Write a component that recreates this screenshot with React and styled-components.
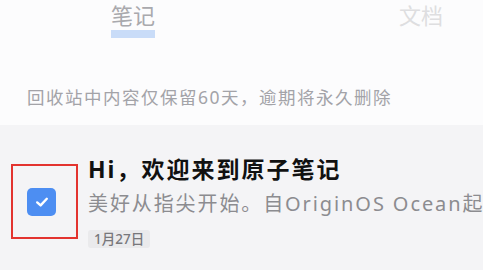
import React from 'react';
import styled, {createGlobalStyle} from 'styled-components';

const GlobalStyle = createGlobalStyle`
    html, body {
        margin: 0;
        padding: 0;
        background: #fcfcfd;
    }
    body {
        width: 483px;
        height: 270px;
        overflow: hidden;
        font-family: "Noto Sans", "Noto Sans CJK SC", sans-serif;
    }
`;

const App = () => {
    const tabs = [
        {label: '笔记', active: true},
        {label: '文档', active: false},
    ];

    return (
        <Page>
            <GlobalStyle/>
            <TabBar>
                {tabs.map(tab => (
                    <Tab key={tab.label}>
                        <TabLabel active={tab.active}>{tab.label}</TabLabel>
                        {tab.active && <TabIndicator/>}
                    </Tab>
                ))}
            </TabBar>

            <Notice>回收站中内容仅保留60天，逾期将永久删除</Notice>

            <NoteList>
                <NoteRow>
                    <SelectFrame>
                        <CheckBox>
                            <svg width="16" height="16" viewBox="0 0 16 16" fill="none">
                                <path d="M3.2 8.4 L6.6 11.4 L12.8 4.8" stroke="#fff" strokeWidth="2.4" strokeLinecap="round" strokeLinejoin="round"/>
                            </svg>
                        </CheckBox>
                    </SelectFrame>
                    <NoteBody>
                        <NoteTitle>Hi，欢迎来到原子笔记</NoteTitle>
                        <NoteSummary>美好从指尖开始。自OriginOS Ocean起</NoteSummary>
                        <DateTag>1月27日</DateTag>
                    </NoteBody>
                </NoteRow>
            </NoteList>
        </Page>
    );
};

export default App;


const Page = styled.div`
    display: flex;
    flex-direction: column;
    height: 270px;
    overflow: hidden;
`;

const TabBar = styled.div`
    display: flex;
    justify-content: space-between;
    padding: 0 40px 0 111px;
    height: 44px;
`;

const Tab = styled.div`
    display: flex;
    flex-direction: column;
    align-items: stretch;
`;

const TabLabel = styled.div`
    font-size: 22px;
    line-height: 30px;
    color: ${p => p.active ? '#a9a9ad' : '#dedee0'};
`;

const TabIndicator = styled.div`
    height: 8px;
    background: #c9dcf8;
`;

const Notice = styled.div`
    padding: 41px 0 0 27px;
    height: 40px;
    font-size: 17.5px;
    line-height: 24px;
    letter-spacing: 1.5px;
    color: #a3a3a8;
    white-space: nowrap;
`;

const NoteList = styled.div`
    flex: 1;
    background: #f4f4f6;
    overflow: hidden;
`;

const NoteRow = styled.div`
    display: flex;
    align-items: flex-start;
    padding: 29px 0 0 11px;
    gap: 10px;
`;

const SelectFrame = styled.div`
    box-sizing: border-box;
    flex-shrink: 0;
    width: 67px;
    height: 75px;
    margin-top: 10px;
    border: 2px solid #e3342f;
    display: flex;
    align-items: center;
    justify-content: flex-start;
    padding-left: 14px;
`;

const CheckBox = styled.div`
    width: 29px;
    height: 28px;
    border-radius: 5px;
    background: #4d8ef2;
    display: flex;
    align-items: center;
    justify-content: center;
`;

const NoteBody = styled.div`
    display: flex;
    flex-direction: column;
    align-items: flex-start;
    min-width: 0;
`;

const NoteTitle = styled.div`
    font-size: 23px;
    line-height: 30px;
    font-weight: 700;
    letter-spacing: 2px;
    color: #111;
    white-space: nowrap;
`;

const NoteSummary = styled.div`
    margin-top: 7px;
    font-size: 20px;
    line-height: 26px;
    letter-spacing: 1.9px;
    color: #8c8c90;
    white-space: nowrap;
`;

const DateTag = styled.div`
    margin-top: 13px;
    padding: 0 6px;
    height: 18px;
    line-height: 18px;
    font-size: 13.5px;
    font-weight: 500;
    border-radius: 3px;
    background: #eaeaec;
    color: #77777b;
`;
